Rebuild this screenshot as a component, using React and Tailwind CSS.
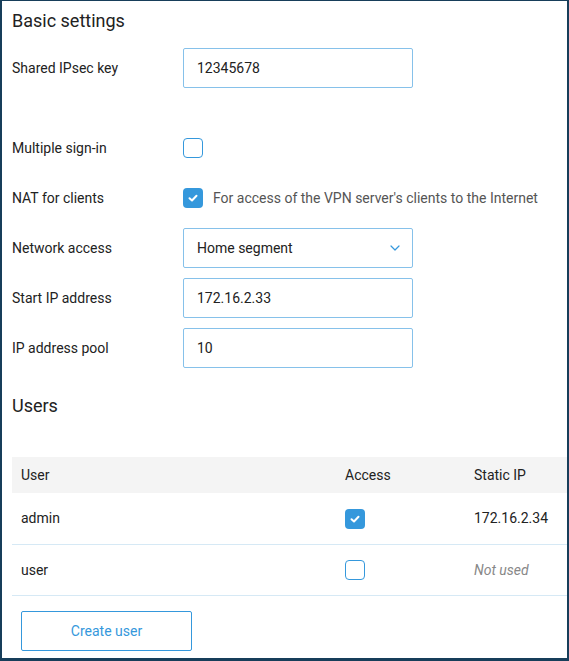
import React from 'react'

function Check({ checked }) {
  if (checked) {
    return (
      <span className="flex h-5 w-5 shrink-0 items-center justify-center rounded-[4px] bg-[#3598dc]">
        <svg viewBox="0 0 12 12" className="h-3 w-3" fill="none" stroke="white" strokeWidth="2" strokeLinecap="round" strokeLinejoin="round">
          <path d="M2.5 6.2 L5 8.5 L9.5 3.8" />
        </svg>
      </span>
    )
  }
  return <span className="block h-5 w-5 shrink-0 rounded-[4px] border border-[#3598dc] bg-white" />
}

function Row({ label, children, className = '' }) {
  return (
    <div className={'flex h-10 items-center ' + className}>
      <div className="w-[171px] shrink-0 text-[14px] text-[#222]">{label}</div>
      {children}
    </div>
  )
}

function Field({ value }) {
  return (
    <div className="flex h-10 w-[230px] items-center rounded-[2px] border border-[#86c1ea] px-[13px] text-[14px] text-[#222]">
      {value}
    </div>
  )
}

export default function App() {
  return (
    <div className="h-[661px] w-[569px] overflow-hidden border-t border-l-2 border-r-2 border-b-[3px] border-[#173e5a] bg-white font-['Roboto',sans-serif]">
      <div className="pl-[10px]">
        <h2 className="pt-[9px] text-[18px] leading-[22px] text-[#222]">Basic settings</h2>
        <div className="mt-[16px] flex flex-col gap-[10px]">
          <Row label="Shared IPsec key"><Field value="12345678" /></Row>
          <Row label="Multiple sign-in" className="mt-[30px]"><Check checked={false} /></Row>
          <Row label="NAT for clients">
            <Check checked />
            <span className="ml-[10px] text-[14px] text-[#555]">For access of the VPN server's clients to the Internet</span>
          </Row>
          <Row label="Network access">
            <div className="flex h-10 w-[230px] items-center justify-between rounded-[2px] border border-[#86c1ea] pl-[13px] pr-[11px] text-[14px] text-[#222]">
              <span>Home segment</span>
              <svg viewBox="0 0 12 12" className="h-3 w-3" fill="none" stroke="#3598dc" strokeWidth="1.2" strokeLinecap="round" strokeLinejoin="round">
                <path d="M2 4 L6 8 L10 4" />
              </svg>
            </div>
          </Row>
          <Row label="Start IP address"><Field value="172.16.2.33" /></Row>
          <Row label="IP address pool"><Field value="10" /></Row>
        </div>
        <h2 className="mt-[27px] text-[18px] leading-[22px] text-[#222]">Users</h2>
        <div className="mt-[40px]">
          <div className="flex h-9 items-center bg-[#f4f4f4] pl-[9px] text-[14px] text-[#222]">
            <div className="w-[324px]">User</div>
            <div className="w-[129px]">Access</div>
            <div>Static IP</div>
          </div>
          <div className="flex h-[52px] items-center border-b border-[#d6e9f5] pl-[9px] text-[14px] text-[#222]">
            <div className="w-[324px]">admin</div>
            <div className="w-[129px]"><Check checked /></div>
            <div>172.16.2.34</div>
          </div>
          <div className="flex h-[51px] items-center border-b border-[#d6e9f5] pl-[9px] text-[14px] text-[#222]">
            <div className="w-[324px]">user</div>
            <div className="w-[129px]"><Check checked={false} /></div>
            <div className="italic text-[#888]">Not used</div>
          </div>
        </div>
        <button className="mt-[15px] ml-[9px] flex h-10 w-[171px] items-center justify-center rounded-[2px] border border-[#3598dc] text-[14px] text-[#3598dc]">
          Create user
        </button>
      </div>
    </div>
  )
}
